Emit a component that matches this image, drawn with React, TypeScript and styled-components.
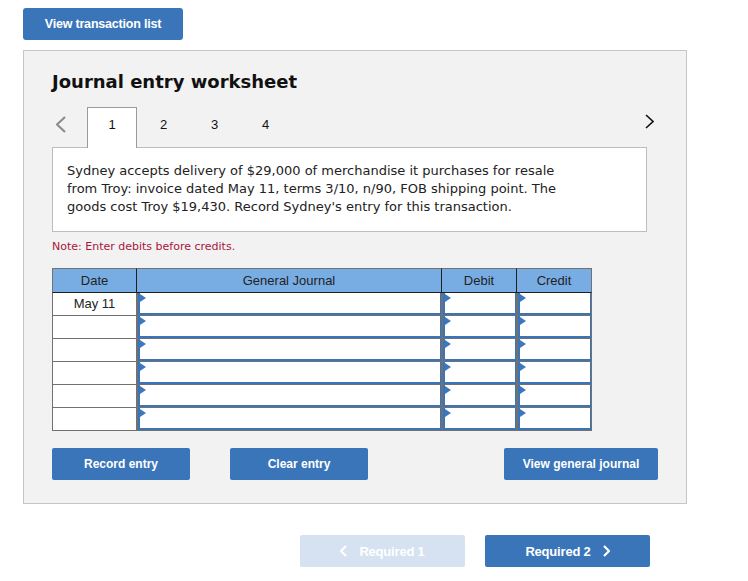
import React from "react";
import styled, { createGlobalStyle } from "styled-components";

const GlobalStyle = createGlobalStyle`
  html, body {
    margin: 0;
    padding: 0;
    background: #ffffff;
  }
  body {
    font-family: "Liberation Sans", Arial, sans-serif;
    color: #222;
  }
`;

const BLUE = "#3a75b9";
const GRID_GRAY = "#717171";

const problemText = [
  "Sydney accepts delivery of $29,000 of merchandise it purchases for resale",
  "from Troy: invoice dated May 11, terms 3/10, n/90, FOB shipping point. The",
  "goods cost Troy $19,430. Record Sydney's entry for this transaction.",
];

const columns = ["Date", "General Journal", "Debit", "Credit"];
const rows = ["May 11", "", "", "", "", ""];

function Chevron({ dir, color, w, h, sw }: { dir: "left" | "right"; color: string; w: number; h: number; sw: number }) {
  const pts = dir === "left" ? `${w - 1},1 1,${h / 2} ${w - 1},${h - 1}` : `1,1 ${w - 1},${h / 2} 1,${h - 1}`;
  return (
    <svg width={w} height={h} viewBox={`0 0 ${w} ${h}`}>
      <polyline points={pts} fill="none" stroke={color} strokeWidth={sw} />
    </svg>
  );
}

export default function App() {
  return (
    <>
      <GlobalStyle />
      <Page>
        <TopButton>View transaction list</TopButton>
        <Panel>
          <Heading>Journal entry worksheet</Heading>
          <TabRow>
            <TabArrow>
              <Chevron dir="left" color="#8c8c8c" w={10} h={17} sw={2.2} />
            </TabArrow>
            {["1", "2", "3", "4"].map((n, i) => (
              <Tab key={n} $active={i === 0}>
                {n}
              </Tab>
            ))}
            <NextArrow>
              <Chevron dir="right" color="#111" w={9} h={15} sw={1.6} />
            </NextArrow>
          </TabRow>
          <ProblemBox>
            {problemText.map((line) => (
              <div key={line}>{line}</div>
            ))}
          </ProblemBox>
          <Note>Note: Enter debits before credits.</Note>
          <Journal>
            {columns.map((c, i) => (
              <HeadCell key={c} $first={i === 0} $last={i === columns.length - 1}>
                {c}
              </HeadCell>
            ))}
            {rows.map((date, r) => (
              <React.Fragment key={r}>
                <DateCell>{date}</DateCell>
                {[0, 1, 2].map((c) => (
                  <InputCell key={c}>
                    <Field />
                  </InputCell>
                ))}
              </React.Fragment>
            ))}
          </Journal>
          <ActionRow>
            <ActionButton $w={138}>Record entry</ActionButton>
            <ActionButton $w={138}>Clear entry</ActionButton>
            <ActionButton $w={154} $push>
              View general journal
            </ActionButton>
          </ActionRow>
        </Panel>
        <NavRow>
          <NavButton $disabled>
            <Chevron dir="left" color="#fff" w={7} h={12} sw={2.2} />
            <span>Required 1</span>
          </NavButton>
          <NavButton>
            <span>Required 2</span>
            <Chevron dir="right" color="#fff" w={7} h={12} sw={2.2} />
          </NavButton>
        </NavRow>
      </Page>
    </>
  );
}

const Page = styled.div`
  padding: 8px 0 0 23px;
  width: 664px;
`;

const TopButton = styled.button`
  display: block;
  width: 160px;
  height: 32px;
  margin: 0 0 10px;
  border: none;
  border-radius: 3px;
  background: ${BLUE};
  color: #fff;
  font-family: "Liberation Sans", Arial, sans-serif;
  font-weight: bold;
  font-size: 12.5px;
  letter-spacing: -0.2px;
  padding: 0;
`;

const Panel = styled.div`
  box-sizing: border-box;
  width: 664px;
  background: #f2f2f2;
  border: 1px solid #c6c6c6;
  padding: 20px 0 23px 28px;
`;

const Heading = styled.h2`
  margin: 0 0 14px;
  font-family: "DejaVu Sans", Verdana, sans-serif;
  font-size: 18px;
  line-height: 22px;
  font-weight: bold;
  color: #111;
`;

const TabRow = styled.div`
  display: flex;
  align-items: flex-start;
  width: 602px;
  height: 41px;
  position: relative;
  z-index: 1;
`;

const TabArrow = styled.div`
  width: 35px;
  height: 41px;
  display: flex;
  align-items: center;
  padding: 0 0 6px 4px;
  box-sizing: border-box;
`;

const NextArrow = styled.div`
  margin-left: auto;
  height: 41px;
  display: flex;
  align-items: center;
  padding-bottom: 12px;
  box-sizing: border-box;
`;

const Tab = styled.div<{ $active?: boolean }>`
  box-sizing: border-box;
  width: ${({ $active }) => ($active ? "50px" : "51px")};
  margin-right: ${({ $active }) => ($active ? "1px" : "0")};
  height: 41px;
  padding-top: 9px;
  text-align: center;
  font-size: 13px;
  line-height: 15px;
  color: #111;
  background: ${({ $active }) => ($active ? "#fff" : "transparent")};
  border: 1px solid ${({ $active }) => ($active ? "#9a9a9a" : "transparent")};
  border-bottom: none;
`;

const ProblemBox = styled.div`
  box-sizing: border-box;
  width: 595px;
  height: 85px;
  margin-top: -1px;
  background: #fff;
  border: 1px solid #bdbdbd;
  padding: 14px 14px;
  font-family: "DejaVu Sans", Verdana, sans-serif;
  font-size: 13px;
  line-height: 18px;
  color: #222;
`;

const Note = styled.div`
  margin: 8px 0 14px;
  font-family: "DejaVu Sans", Verdana, sans-serif;
  font-size: 11px;
  line-height: 14px;
  color: #a8163a;
`;

const Journal = styled.div`
  display: grid;
  grid-template-columns: 85px 305px 75px 75px;
  grid-template-rows: 25px repeat(6, 23px);
  width: 540px;
`;

const HeadCell = styled.div<{ $first?: boolean; $last?: boolean }>`
  box-sizing: border-box;
  display: flex;
  align-items: center;
  justify-content: center;
  background: #78ade4;
  border-top: 1px solid ${GRID_GRAY};
  border-bottom: 1px solid #1e1e1e;
  border-left: ${({ $first }) => ($first ? `1px solid ${GRID_GRAY}` : "none")};
  border-right: 1px solid ${({ $last }) => ($last ? GRID_GRAY : "#1e1e1e")};
  font-size: 13px;
  color: #222;
`;

const DateCell = styled.div`
  box-sizing: border-box;
  display: flex;
  align-items: center;
  justify-content: center;
  background: #fff;
  border-left: 1px solid ${GRID_GRAY};
  border-right: 1px solid ${GRID_GRAY};
  border-bottom: 1px solid ${GRID_GRAY};
  padding-bottom: 1px;
  font-size: 13px;
  color: #222;
`;

const InputCell = styled.div`
  box-sizing: border-box;
  background: ${GRID_GRAY};
  padding: 0 1px 1px 1px;
`;

const Field = styled.div`
  position: relative;
  box-sizing: border-box;
  height: 22px;
  background: #fff;
  border-left: 2px solid ${BLUE};
  border-right: 1px solid ${BLUE};
  border-bottom: 2px solid ${BLUE};

  &::before {
    content: "";
    position: absolute;
    top: 1px;
    left: 0;
    border-top: 4px solid transparent;
    border-bottom: 4px solid transparent;
    border-left: 6px solid #3c78c0;
  }
`;

const ActionRow = styled.div`
  display: flex;
  gap: 40px;
  width: 606px;
  margin-top: 17px;
`;

const ActionButton = styled.button<{ $w: number; $push?: boolean }>`
  width: ${({ $w }) => $w}px;
  height: 32px;
  margin-left: ${({ $push }) => ($push ? "auto" : "0")};
  border: none;
  border-radius: 2px;
  background: ${BLUE};
  color: #fff;
  font-family: "Liberation Sans", Arial, sans-serif;
  font-weight: bold;
  font-size: 12px;
  padding: 0;
`;

const NavRow = styled.div`
  display: flex;
  justify-content: flex-end;
  gap: 20px;
  margin-top: 31px;
  padding-right: 37px;
`;

const NavButton = styled.button<{ $disabled?: boolean }>`
  width: 165px;
  height: 32px;
  display: flex;
  align-items: center;
  justify-content: center;
  gap: 12px;
  border: none;
  border-radius: 2px;
  background: ${({ $disabled }) => ($disabled ? "#d6e2f1" : BLUE)};
  color: #fff;
  font-family: "Liberation Sans", Arial, sans-serif;
  font-weight: bold;
  font-size: 13px;
  letter-spacing: -0.2px;
  padding: 0;
`;
